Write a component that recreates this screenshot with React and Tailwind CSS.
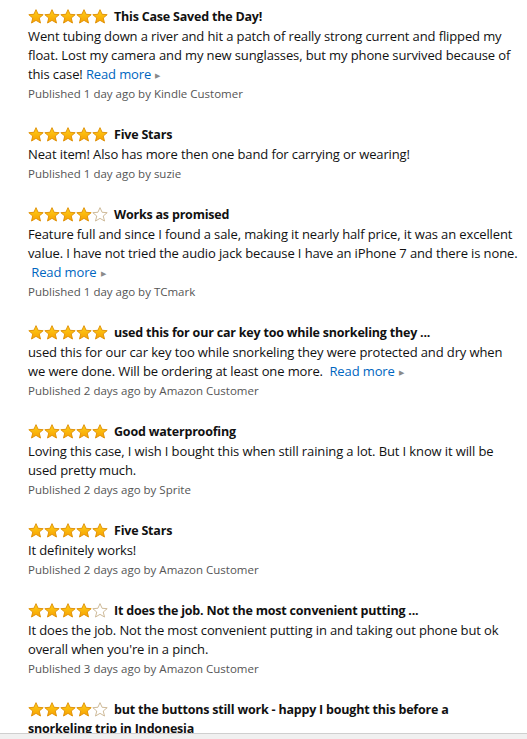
const reviews = [
  {
    stars: 5,
    title: ["This Case Saved the Day!"],
    body: [
      "Went tubing down a river and hit a patch of really strong current and flipped my",
      "float. Lost my camera and my new sunglasses, but my phone survived because of",
      "this case!",
    ],
    more: "tight",
    meta: "Published 1 day ago by Kindle Customer",
  },
  {
    stars: 5,
    title: ["Five Stars"],
    body: ["Neat item! Also has more then one band for carrying or wearing!"],
    meta: "Published 1 day ago by suzie",
  },
  {
    stars: 4,
    title: ["Works as promised"],
    body: [
      "Feature full and since I found a sale, making it nearly half price, it was an excellent",
      "value. I have not tried the audio jack because I have an iPhone 7 and there is none.",
    ],
    more: "newline",
    meta: "Published 1 day ago by TCmark",
  },
  {
    stars: 5,
    title: ["used this for our car key too while snorkeling they ..."],
    body: [
      "used this for our car key too while snorkeling they were protected and dry when",
      "we were done. Will be ordering at least one more.",
    ],
    more: "inline",
    meta: "Published 2 days ago by Amazon Customer",
  },
  {
    stars: 5,
    title: ["Good waterproofing"],
    body: [
      "Loving this case, I wish I bought this when still raining a lot. But I know it will be",
      "used pretty much.",
    ],
    meta: "Published 2 days ago by Sprite",
  },
  {
    stars: 5,
    title: ["Five Stars"],
    body: ["It definitely works!"],
    meta: "Published 2 days ago by Amazon Customer",
  },
  {
    stars: 4,
    title: ["It does the job. Not the most convenient putting ..."],
    body: [
      "It does the job. Not the most convenient putting in and taking out phone but ok",
      "overall when you're in a pinch.",
    ],
    meta: "Published 3 days ago by Amazon Customer",
  },
  {
    stars: 4,
    title: ["but the buttons still work - happy I bought this before a", "snorkeling trip in Indonesia"],
    body: [],
    meta: "",
  },
];

function Star({ filled }) {
  return (
    <svg width="16" height="15" viewBox="0 0 24 23" className="block">
      <defs>
        <linearGradient id="starfill" x1="0" y1="0" x2="0" y2="1">
          <stop offset="0" stopColor="#ffd11a" />
          <stop offset="1" stopColor="#f7a000" />
        </linearGradient>
      </defs>
      <polygon
        points="12,1 15.2,8.1 23,8.7 17,13.8 18.9,21.5 12,17.4 5.1,21.5 7,13.8 1,8.7 8.8,8.1"
        fill={filled ? "url(#starfill)" : "#ffffff"}
        stroke={filled ? "#de8d00" : "#c9b38f"}
        strokeWidth="1.4"
        strokeLinejoin="round"
      />
    </svg>
  );
}

function ReadMore({ pad = true }) {
  return (
    <a className="whitespace-nowrap text-[#0066c0]">
      {pad && "\u00a0"}Read more
      <span className="ml-[4px] inline-block align-[1px] text-[7px] leading-none text-[#8a8a8a]">▶</span>
    </a>
  );
}

function Review({ r }) {
  return (
    <div className="mb-[22px]">
      <div className="mb-px whitespace-nowrap text-[12.5px] font-bold leading-[19px] tracking-[-0.2px] text-[#111]">
        <span className="mr-[6px] inline-flex h-[19px] items-center align-top">
          {[0, 1, 2, 3, 4].map((i) => (
            <Star key={i} filled={i < r.stars} />
          ))}
        </span>
        {r.title.map((t, i) => (
          <span key={i}>
            {i > 0 && <br />}
            {t}
          </span>
        ))}
      </div>
      {r.body.length > 0 && (
        <p className="whitespace-nowrap text-[13px] leading-[19px] tracking-[-0.12px] text-[#111]">
          {r.body.map((line, i) => (
            <span key={i}>
              {i > 0 && <br />}
              {line}
            </span>
          ))}
          {r.more === "tight" && (
            <>
              {" "}
              <ReadMore pad={false} />
            </>
          )}
          {r.more === "inline" && (
            <>
              {" "}
              <ReadMore />
            </>
          )}
          {r.more === "newline" && (
            <>
              <br />
              <ReadMore />
            </>
          )}
        </p>
      )}
      {r.meta && <div className="text-[11.5px] leading-[19px] text-[#555]">{r.meta}</div>}
    </div>
  );
}

export default function App() {
  return (
    <div className="flex h-[739px] w-[527px] flex-col bg-white font-['Open_Sans',sans-serif]">
      <div className="flex-1 overflow-hidden pl-[28px] pr-[8px] pt-[7px]">
        {reviews.map((r, i) => (
          <Review key={i} r={r} />
        ))}
      </div>
      <div className="h-[6px] border-t border-[#cfcfcf] bg-[#f0f0f0]" />
    </div>
  );
}
